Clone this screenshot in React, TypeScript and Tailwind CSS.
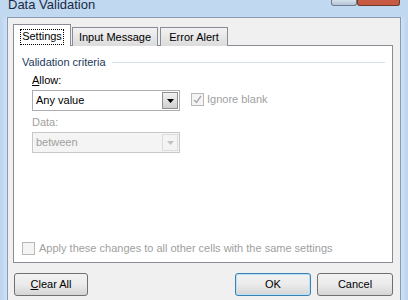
import React from "react";

const font = { fontFamily: '"Liberation Sans", Tahoma, sans-serif' };

// small dropdown arrow box used in the combo boxes
const ComboArrow = ({ disabled }: { disabled?: boolean }) => (
  <div
    className={`w-[16px] h-[17px] flex items-center justify-center border ${
      disabled
        ? "border-[#dcdcdc] bg-[#f4f4f4]"
        : "border-[#8e8f8f] bg-gradient-to-b from-[#f2f2f2] to-[#cfcfcf]"
    }`}
  >
    <svg width="7" height="4" viewBox="0 0 7 4">
      <path d="M0 0h7L3.5 4z" fill={disabled ? "#c2c2c2" : "#000"} />
    </svg>
  </div>
);

const Checkbox = ({ checked }: { checked?: boolean }) => (
  <div className="w-[13px] h-[13px] border border-[#b8b8b8] bg-[#f4f4f4] flex items-center justify-center">
    {checked && (
      <svg width="9" height="9" viewBox="0 0 9 9">
        <path d="M1 5l2.5 2.5L8 1" stroke="#a8a8a8" strokeWidth="1.4" fill="none" />
      </svg>
    )}
  </div>
);

const Button = ({ label, accel, focused, width }: { label: string; accel?: number; focused?: boolean; width: string }) => (
  <div
    className={`${width} h-[23px] rounded-[3px] border flex items-center justify-center text-black bg-gradient-to-b from-[#f2f2f2] via-[#ebebeb] to-[#d5d5d5] ${
      focused ? "border-[#3c7fb1] shadow-[inset_0_0_0_1px_#b6e3f7]" : "border-[#707070]"
    }`}
  >
    {accel !== undefined ? (
      <span>
        {label.slice(0, accel)}
        <span className="underline">{label[accel]}</span>
        {label.slice(accel + 1)}
      </span>
    ) : (
      label
    )}
  </div>
);

export default function App() {
  return (
    <div className="w-[408px] h-[300px] overflow-hidden flex flex-col bg-[#c0d8f0] text-[11px] leading-[13px]" style={font}>
      {/* title bar */}
      <div className="h-[17px] flex items-start relative">
        <span className="ml-[8px] -mt-[3px] text-[13px] leading-[15px] text-[#1b2b44]">Data Validation</span>
        <div className="ml-auto mr-[8px] flex">
          <div className="w-[26px] h-[6px] border border-t-0 border-[#6d7b8c] rounded-b-[3px] bg-gradient-to-b from-[#d6e0ec] to-[#b4c3d6]" />
          <div className="w-[43px] h-[6px] border border-t-0 border-[#6b3a2b] rounded-b-[3px] bg-[#c75a42]" />
        </div>
      </div>

      <div className="flex-1 flex">
        <div className="w-[7px] bg-gradient-to-r from-[#bcd4ee] to-[#cfe1f5]" />
        {/* dialog body */}
        <div className="w-[393px] bg-[#f0f0f0] border-l border-t border-[#8a9bb0] flex flex-col">
          {/* tabs */}
          <div className="ml-[5px] mt-[6px] h-[22px] flex items-end relative z-10">
            <div className="h-[22px] w-[58px] pt-[5px] flex justify-center border border-b-0 border-[#898c95] bg-white">
              <span className="px-[1px] h-[14px] outline-1 outline-dotted outline-black">Settings</span>
            </div>
            <div className="ml-[1px] h-[19px] w-[86px] pt-[3px] flex justify-center border border-b-0 border-[#898c95] bg-gradient-to-b from-[#f2f2f2] to-[#dcdcdc]">
              Input Message
            </div>
            <div className="ml-[2px] h-[19px] w-[68px] pt-[3px] flex justify-center border border-b-0 border-[#898c95] bg-gradient-to-b from-[#f2f2f2] to-[#dcdcdc]">
              Error Alert
            </div>
          </div>

          {/* tab panel */}
          <div className="ml-[5px] -mt-px w-[380px] h-[218px] border border-[#898c95] bg-white flex flex-col">
            <div className="mt-[10px] ml-[8px] flex items-center">
              <span className="text-[#1e395b]">Validation criteria</span>
              <div className="ml-[6px] mr-[7px] flex-1 h-px bg-[#d5dfe5]" />
            </div>

            <div className="ml-[18px] mt-[5px] flex">
              <div className="flex flex-col">
                <span>
                  <span className="underline">A</span>llow:
                </span>
                <div className="mt-[3px] w-[148px] h-[21px] border border-[#abadb3] flex items-center pl-[3px] pr-[1px]">
                  <span className="flex-1">Any value</span>
                  <ComboArrow />
                </div>
                <span className="mt-[5px] text-[#a0a0a0]">Data:</span>
                <div className="mt-[3px] w-[148px] h-[21px] border border-[#c8c8c8] bg-[#f4f4f4] flex items-center pl-[3px] pr-[1px]">
                  <span className="flex-1 text-[#a0a0a0]">between</span>
                  <ComboArrow disabled />
                </div>
              </div>
              <div className="ml-[11px] mt-[19px] flex items-start gap-[3px]">
                <Checkbox checked />
                <span className="text-[#a0a0a0]">Ignore blank</span>
              </div>
            </div>

            <div className="mt-auto mb-[7px] ml-[8px] flex items-center gap-[4px]">
              <Checkbox />
              <span className="text-[#a0a0a0]">Apply these changes to all other cells with the same settings</span>
            </div>
          </div>

          {/* buttons */}
          <div className="mt-[10px] ml-[6px] mr-[7px] flex">
            <Button label="Clear All" accel={0} width="w-[74px]" />
            <div className="flex-1" />
            <Button label="OK" focused width="w-[76px]" />
            <div className="w-[6px]" />
            <Button label="Cancel" width="w-[76px]" />
          </div>
        </div>
        <div className="flex-1 bg-gradient-to-r from-[#cfe1f5] to-[#bcd4ee] border-l border-[#8a9bb0]" />
      </div>
    </div>
  );
}
